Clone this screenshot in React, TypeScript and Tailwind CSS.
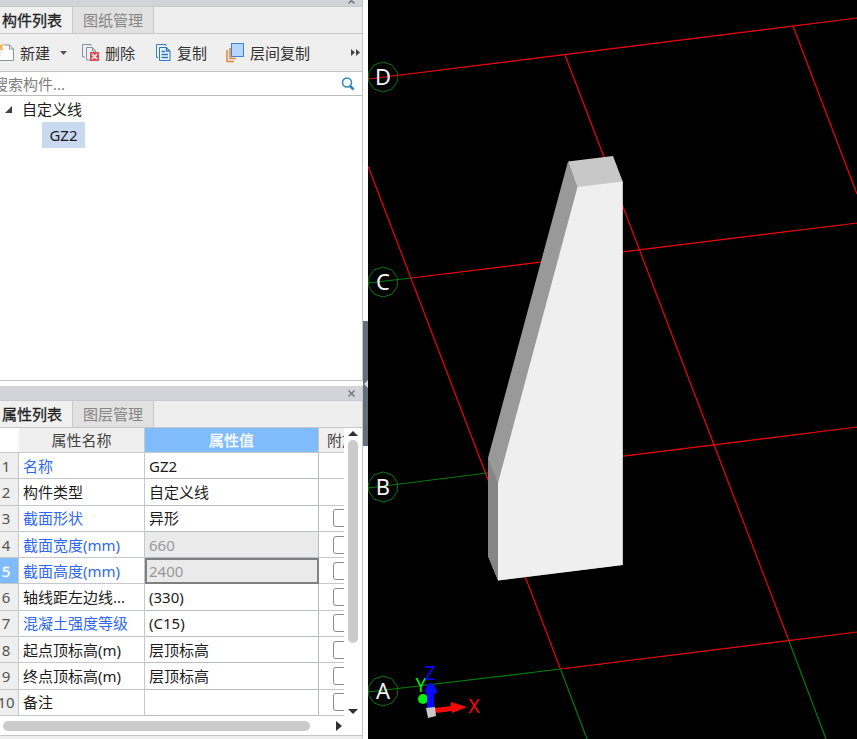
import { useState } from "react";

interface PropertyRow {
  name: string;
  value: string;
  link?: boolean;
  locked?: boolean;
  extra?: boolean;
}

const ROWS: PropertyRow[] = [
  { name: "名称", value: "GZ2", link: true },
  { name: "构件类型", value: "自定义线" },
  { name: "截面形状", value: "异形", link: true, extra: true },
  { name: "截面宽度(mm)", value: "660", link: true, locked: true, extra: true },
  { name: "截面高度(mm)", value: "2400", link: true, locked: true, extra: true },
  { name: "轴线距左边线...", value: "(330)", extra: true },
  { name: "混凝土强度等级", value: "(C15)", link: true, extra: true },
  { name: "起点顶标高(m)", value: "层顶标高", extra: true },
  { name: "终点顶标高(m)", value: "层顶标高", extra: true },
  { name: "备注", value: "", extra: true },
];

const AXES = [
  { label: "D", y: 77 },
  { label: "C", y: 282 },
  { label: "B", y: 487 },
  { label: "A", y: 691 },
];

function NewIcon() {
  return (
    <svg width="16" height="20" viewBox="0 0 16 20" fill="none">
      <path d="M-1 17.500H13.500V6L9.500 2H4" fill="#fdfdfd" stroke="#8492a3" />
      <path d="M9.500 2V6H13.500" stroke="#8492a3" />
      <path d="M0 2H2V5H0Z" fill="#f5b14b" />
      <path d="M0 4L3 1M0 6H3" stroke="#f5b14b" strokeWidth="1.500" />
    </svg>
  );
}

function DeleteIcon() {
  return (
    <svg width="18" height="20" viewBox="0 0 18 20" fill="none">
      <path d="M3 14H0.500V1.500H9V3" stroke="#8492a3" />
      <path d="M8 17H4.500V4.500H10.500L13.500 8V9" stroke="#8492a3" />
      <path d="M10.500 4.500V8H13.500" stroke="#8492a3" />
      <rect x="8" y="9" width="9" height="9" fill="#e04c50" />
      <path d="M10 11L15 16M15 11L10 16" stroke="#fff" strokeWidth="1.500" />
    </svg>
  );
}

function CopyIcon() {
  return (
    <svg width="16" height="20" viewBox="0 0 16 20" fill="none">
      <path d="M3 14.500H1.500V1.500H11V3" stroke="#3d7ebf" />
      <path d="M4.500 4.500H11.500L15 8V17.500H4.500Z" fill="#eaf4ff" stroke="#2f76bd" />
      <path d="M11.500 4.500V8H15M6.500 8.500H10M6.500 11.500H13M6.500 14.500H13" stroke="#2f76bd" strokeWidth="1.500" />
    </svg>
  );
}

function LayerCopyIcon() {
  return (
    <svg width="18" height="20" viewBox="0 0 18 20" fill="none">
      <path d="M1 7V18.500H8M4 5V15.500H10" stroke="#e98234" strokeWidth="1.500" />
      <rect x="5.500" y="0.500" width="12" height="13" fill="#b3d7ff" stroke="#3f83d0" />
    </svg>
  );
}

function SearchIcon() {
  return (
    <svg width="14" height="14" viewBox="0 0 14 14" fill="none" stroke="#2b87b8">
      <circle cx="6" cy="5.500" r="4.500" strokeWidth="1.500" />
      <path d="M9 9L12.500 12.500" strokeWidth="2.500" />
    </svg>
  );
}

function CloseIcon() {
  return (
    <svg width="7" height="7" viewBox="0 0 7 7" stroke="#77787c" strokeWidth="1.500">
      <path d="M0.500 0.500L6.500 6.500M6.500 0.500L0.500 6.500" />
    </svg>
  );
}

function Tabs({ items }: { items: string[] }) {
  const [active, setActive] = useState(0);
  return (
    <div role="tablist" className="flex h-[27px] shrink-0 border-b border-[#c6c7c9] bg-[#eeeeee]">
      {items.map((item, i) => (
        <button
          key={item}
          role="tab"
          aria-selected={active === i}
          onClick={() => setActive(i)}
          className={
            active === i
              ? "w-[73px] border-r border-[#c9cacc] bg-[#f0f0f0] pr-2 text-[#222222] [-webkit-text-stroke:0.3px]"
              : "w-[81px] border-r border-[#c9cacc] bg-[#e1e1e1] text-[#858585]"
          }
        >
          {item}
        </button>
      ))}
    </div>
  );
}

function ComponentPanel() {
  return (
    <section className="flex min-h-0 flex-1 flex-col border-r border-b border-[#c3c5c8] bg-white">
      <div className="flex h-[7px] shrink-0 items-end justify-end overflow-hidden border-b border-[#c9cacf] bg-[#d3d4d9] pr-[7px]">
        <button aria-label="关闭构件列表" className="flex h-2 items-end pb-[2px]">
          <CloseIcon />
        </button>
      </div>
      <Tabs items={["构件列表", "图纸管理"]} />

      {/* Toolbar */}
      <div className="flex h-[38px] shrink-0 items-center border-b border-[#c3c5c8] bg-[#efefef] text-[#333333]">
        <button className="flex items-center gap-1">
          <NewIcon />
          新建
        </button>
        <button aria-label="新建选项" className="ml-[10px] flex">
          <svg width="7" height="4" viewBox="0 0 7 4" fill="#555">
            <path d="M0 0H7L3.500 4Z" />
          </svg>
        </button>
        <button className="ml-[15px] flex items-center gap-[5px]">
          <DeleteIcon />
          删除
        </button>
        <button className="ml-5 flex items-center gap-[6px]">
          <CopyIcon />
          复制
        </button>
        <button className="ml-[19px] flex items-center gap-[6px]">
          <LayerCopyIcon />
          层间复制
        </button>
        <button aria-label="更多" className="mr-[2px] ml-auto flex">
          <svg width="9" height="7" viewBox="0 0 9 7" fill="#444">
            <path d="M0 0L4 3.500L0 7ZM5 0L9 3.500L5 7Z" />
          </svg>
        </button>
      </div>

      <div className="flex h-6 shrink-0 items-center overflow-hidden border-b border-[#b9bbbe] pr-[7px]">
        <input
          aria-label="搜索构件"
          placeholder="搜索构件..."
          className="-ml-[7px] min-w-0 flex-1 outline-none placeholder:text-[#808080]"
        />
        <button aria-label="搜索" className="flex">
          <SearchIcon />
        </button>
      </div>

      {/* Component tree */}
      <ul className="text-[#1c1c1c]">
        <li>
          <button className="flex h-[26px] items-center gap-[10px] pl-[5px]">
            <svg width="7" height="7" viewBox="0 0 7 7" fill="#404040">
              <path d="M7 0V7H0Z" />
            </svg>
            自定义线
          </button>
          <ul className="pl-[42px]">
            <li>
              <button className="h-[26px] w-[43px] bg-[#c9daf0]">GZ2</button>
            </li>
          </ul>
        </li>
      </ul>
    </section>
  );
}

function PropertyTable() {
  const [selected, setSelected] = useState(4);
  return (
    <table className="h-[288px] w-[365px] table-fixed border-separate border-spacing-0 text-left whitespace-nowrap">
      <colgroup>
        <col className="w-[19px]" />
        <col className="w-[126px]" />
        <col className="w-[174px]" />
        <col className="w-[46px]" />
      </colgroup>
      <thead>
        <tr className="h-[25px] text-center text-[#444444]">
          <td className="border-b border-[#c6c7c9] bg-white" />
          <th className="border-r border-b border-[#c6c7c9] bg-[#efefef] p-0 font-normal">属性名称</th>
          <th className="border-r border-b border-[#c6c7c9] bg-[#80bbfb] p-0 font-normal text-white [-webkit-text-stroke:0.3px]">
            属性值
          </th>
          <th className="border-b border-[#c6c7c9] bg-[#efefef] p-0 font-normal">附加</th>
        </tr>
      </thead>
      <tbody>
        {ROWS.map((row, i) => {
          const current = selected === i;
          return (
            <tr key={row.name} onClick={() => setSelected(i)}>
              <td
                className={
                  current
                    ? "border-r border-b border-[#c6c7c9] bg-[#80bbfb] p-0 text-white [-webkit-text-stroke:0.3px]"
                    : "border-r border-b border-[#c6c7c9] bg-[#efefef] p-0 text-[#555555]"
                }
              >
                <span className="-ml-[2px] flex w-4 justify-center leading-5">{i + 1}</span>
              </td>
              <td
                className={
                  row.link
                    ? "border-r border-b border-[#c3c8d0] p-0 pl-1 leading-5 text-[#2f68f0]"
                    : "border-r border-b border-[#c3c8d0] p-0 pl-1 leading-5 text-[#1c1c1c]"
                }
              >
                {row.name}
              </td>
              <td
                className={
                  "border-r border-b border-[#b9bdc2] p-0 pl-1 leading-5 " +
                  (row.locked ? "bg-[#eaeaea] text-[#999999] " : "text-[#1c1c1c] ") +
                  (current ? "outline-2 -outline-offset-2 outline-[#808080]" : "")
                }
              >
                {row.value}
              </td>
              <td className="border-b border-[#c6c7c9] p-0">
                {row.extra && (
                  <input
                    type="checkbox"
                    aria-label={`附加 ${row.name}`}
                    className="mx-auto block size-[18px] appearance-none rounded-[3px] border border-[#8c8c8c] bg-white checked:bg-[#80bbfb]"
                  />
                )}
              </td>
            </tr>
          );
        })}
      </tbody>
    </table>
  );
}

function PropertyPanel() {
  return (
    <section className="flex shrink-0 flex-col border-r border-[#c3c5c8] bg-white">
      <div className="flex h-[15px] items-center justify-end border-b border-[#c9cacf] bg-[#d3d4d9] pt-px pr-[7px]">
        <button aria-label="关闭属性列表" className="flex">
          <CloseIcon />
        </button>
      </div>
      <Tabs items={["属性列表", "图层管理"]} />
      <div className="flex">
        <div className="min-w-0 flex-1 overflow-hidden">
          <PropertyTable />
        </div>
        <div className="flex w-[18px] shrink-0 flex-col items-center pt-[3px] pb-[2px]">
          <svg width="10" height="5" viewBox="0 0 10 5" fill="#303030">
            <path d="M5 0L10 5H0Z" />
          </svg>
          <div className="mt-1 h-[203px] w-[10px] rounded-full bg-[#cbcbcb]" />
          <svg className="mt-auto" width="10" height="5" viewBox="0 0 10 5" fill="#303030">
            <path d="M0 0H10L5 5Z" />
          </svg>
        </div>
      </div>
      <div className="flex h-5 items-center border-b border-[#c3c5c8] pr-5 pl-[3px]">
        <div className="h-[10px] w-[307px] rounded-full bg-[#cbcbcb]" />
        <svg className="ml-auto" width="6" height="10" viewBox="0 0 6 10" fill="#303030">
          <path d="M0 0L6 5L0 10Z" />
        </svg>
      </div>
      <div className="h-[3px] bg-[#eeeeee]" />
    </section>
  );
}

function ModelView() {
  return (
    <main className="min-w-0 flex-1 bg-black">
      <svg className="h-full w-full" viewBox="0 0 489 739" preserveAspectRatio="xMinYMin slice" fill="none">
        {/* Axis grid */}
        <g stroke="#f5000c" strokeWidth="1.200">
          <path d="M0 79L489 18M43 278L489 223M119 473L489 427M192.500 669L489 632" />
          <path d="M0 166L192.500 669M197 55L421 641M425 26L489 194" />
        </g>
        <g stroke="#077a0b" strokeWidth="1.200">
          <path d="M0 283L43 278M0 488L119 473M0 692L192.500 669" />
          <path d="M192.500 669L219 739M421 641L458 739" />
        </g>

        {AXES.map((axis) => (
          <g key={axis.label} transform={`translate(15 ${axis.y})`}>
            <path
              d="M0 -15L8.800 -12.100L14.300 -4.600V4.600L8.800 12.100L0 15L-8.800 12.100L-14.300 4.600V-4.600L-8.800 -12.100Z"
              stroke="#077a0b"
            />
            <text y="8" textAnchor="middle" fontSize="22" fill="#f4f4f4">
              {axis.label}
            </text>
          </g>
        ))}

        {/* Tapered column, base silhouette first so the faces join without gaps */}
        <path d="M200 161.500L209.500 187L254.700 181.500V565L130 580.500L120 556V458Z" fill="#999999" />
        <path d="M200 161.500L245 156L254.700 181.500V183L209.500 188Z" fill="#c8c8c8" />
        <path d="M120 458L130 483V580.500L120 556Z" fill="#868686" />
        <path d="M209.500 187L254.700 181.500V565L130 580.500V483Z" fill="#efefef" />

        {/* Orientation gizmo */}
        <circle cx="55" cy="699" r="5" fill="#00f010" />
        <path d="M59 709V694H57L62 682L69 694H66V709Z" fill="#0808ff" />
        <path d="M57 690C57 696 69 696 69 690L65 684H60Z" fill="#0808ff" />
        <path d="M67 708L83 706V702L99 707L84 713V711L67 713Z" fill="#ff0505" />
        <path d="M58 708L67 707L68 716L60 718Z" fill="#c9c9c9" />
        <g fontSize="19" textAnchor="middle">
          <text x="106" y="713" fill="#ff0505">X</text>
          <text x="53" y="692" fill="#00f010">Y</text>
          <text x="62" y="680" fill="#0808ff">Z</text>
        </g>
      </svg>
    </main>
  );
}

export default function App() {
  return (
    <div className="flex h-screen overflow-hidden bg-white font-['Noto_Sans','Noto_Sans_CJK_SC',sans-serif] text-[15px] leading-5">
      <aside className="flex w-[363px] shrink-0 flex-col gap-[5px]">
        <ComponentPanel />
        <PropertyPanel />
      </aside>

      {/* Collapse handle between the panels and the model */}
      <div className="flex w-[5px] shrink-0 flex-col justify-center pt-7">
        <button aria-label="折叠面板" className="flex h-[125px] items-center justify-end bg-[#62707c]">
          <svg width="4" height="8" viewBox="0 0 4 8" fill="#d5dade">
            <path d="M4 0V8L0 4Z" />
          </svg>
        </button>
      </div>
      <ModelView />
    </div>
  );
}
